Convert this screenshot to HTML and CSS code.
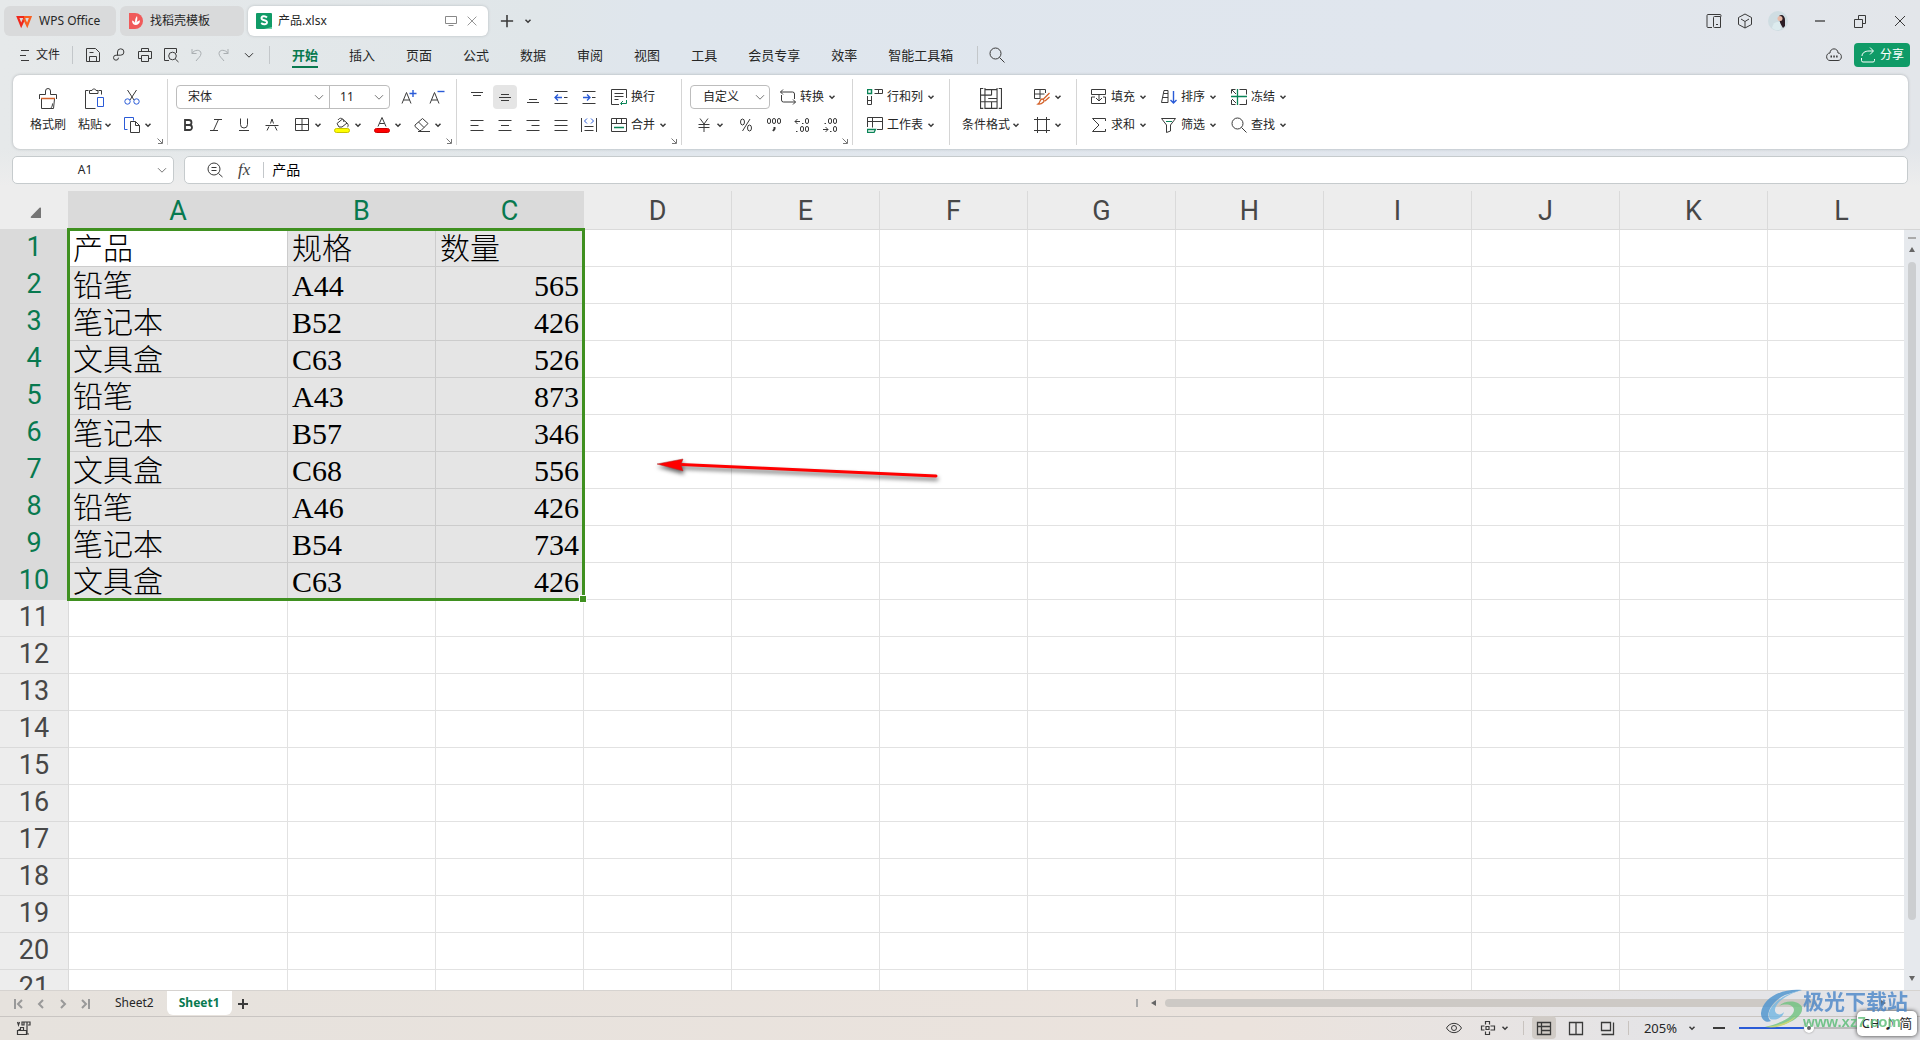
FILE: index.html
```html
<!DOCTYPE html>
<html lang="zh-CN">
<head>
<meta charset="utf-8">
<title>产品.xlsx</title>
<link rel="stylesheet" href="styles.css">
</head>
<body>
<svg class="sprite" aria-hidden="true">
  <symbol id="chev" viewBox="0 0 8 8"><path d="M1.5 2.8 4 5.2 6.500 2.800" stroke-width="1.5"/></symbol>
  <symbol id="chev-thin" viewBox="0 0 10 10"><path d="M1 3.200 5 7.200 9 3.200"/></symbol>
  <symbol id="launch" viewBox="0 0 6 6"><path d="M.5.5 5 5M5.500 1v4.500H1"/></symbol>
  <symbol id="search" viewBox="0 0 16 16"><circle cx="6.500" cy="6.500" r="5.500"/><path d="m10.500 10.500 5 5"/></symbol>
  <symbol id="brush" viewBox="0 0 20 22"><path d="M1.500 11V6.500h6V3a2.500 2.500 0 0 1 5 0v3.500h6V11M3.500 11v9.500h12l1-9.500M12.500 20.500c1.500-1.500 2-3 2-5"/><path d="M3 10.500h14" stroke="#d4622a" stroke-width="1.500"/></symbol>
  <symbol id="paste" viewBox="0 0 22 22"><path d="M4.500 2.500h-3v18h10M14.500 2.500h3v4M5.500 5.500v-3h2.500c0-2 4-2 4 0h2v3z"/><path d="M13.500 9.500h6v9h-6z" stroke="#2a5bd7"/></symbol>
  <symbol id="cut" viewBox="0 0 16 16"><path d="m3.500 1 6.500 10M12.500 1 6 11"/><circle cx="3.500" cy="12.500" r="2.700" stroke="#2a5bd7"/><circle cx="12.500" cy="12.500" r="2.700" stroke="#2a5bd7"/></symbol>
  <symbol id="copy" viewBox="0 0 16 16"><path d="M3.500 12.500h-3v-12h9v3" stroke="#2a5bd7"/><path d="M6.500 4.500h5l4 4v7h-9zM11.500 4.500v4h4"/></symbol>
  <symbol id="aplus" viewBox="0 0 16 16"><path d="m1 14.500 4.500-11 4.500 11M2.500 11h6"/><path d="M8.500 4.500h7M12 1v7" stroke="#2a5bd7" stroke-width="1.400"/></symbol>
  <symbol id="aminus" viewBox="0 0 16 16"><path d="m1 14.500 4.500-11 4.500 11M2.500 11h6"/><path d="M8.500 2.500h7" stroke="#2a5bd7" stroke-width="1.400"/></symbol>
  <symbol id="bold" viewBox="0 0 16 16"><path d="M5 3h4a2.500 2.500 0 0 1 0 5H5zM5 8h4.500a2.500 2.500 0 0 1 0 5H5z" stroke-width="1.800"/></symbol>
  <symbol id="italic" viewBox="0 0 16 16"><path d="M6 2.500h8M2 13.500h8M10.500 2.500l-5 11"/></symbol>
  <symbol id="underline" viewBox="0 0 16 16"><path d="M4.500 1.500v6a3.500 3.500 0 0 0 7 0v-6M3 13.500h10"/></symbol>
  <symbol id="strike" viewBox="0 0 16 16"><path d="m3 13.500 2-4M6.500 6.500 8 2l1.500 4.500M11 9.500l2 4M1.500 8.500h13"/></symbol>
  <symbol id="borders" viewBox="0 0 16 16"><path d="M1.500 1.500h13v12h-13zM8 1.500v12M1.500 7.500h13"/></symbol>
  <symbol id="fill" viewBox="0 0 16 16"><path d="M3 6.500 8.500 2l4.500 4-5 4H5zM4 3c2-3 5-2 6 2M13 6c2 2 1 4 .500 4"/><rect x=".500" y="11.500" width="15" height="4" rx="2" fill="#ff0" stroke="#c9c400"/></symbol>
  <symbol id="fcolor" viewBox="0 0 16 16"><path d="m4 9.500 4-9 4 9M5.500 6.500h5"/><rect x=".500" y="11.500" width="15" height="4" rx="2" fill="#f00" stroke="#c00"/></symbol>
  <symbol id="eraser" viewBox="0 0 16 16"><path d="m1 8 7.500-6.500 5.500 5L7 13.500H5.500L1 9.500zM4.500 5l5.500 5.500M4 14.500h12"/></symbol>
  <symbol id="vtop" viewBox="0 0 16 16"><path d="M2 3.500h12M4 6.500h8"/></symbol>
  <symbol id="vmid" viewBox="0 0 16 16"><path d="M4 5.500h8M2 8.500h12M4 11.500h8"/></symbol>
  <symbol id="vbot" viewBox="0 0 16 16"><path d="M4 10.500h8M2 13.500h12"/></symbol>
  <symbol id="outdent" viewBox="0 0 16 16"><path d="M1.500 2.500h13M1.500 14.500h13M11 8.500h3.500"/><path d="M9 8.500H2M5 5.500l-3 3 3 3" stroke="#2a5bd7" stroke-width="1.300"/></symbol>
  <symbol id="indent" viewBox="0 0 16 16"><path d="M1.500 2.500h13M1.500 14.500h13M11 8.500h3.500"/><path d="M2 8.500h7M6 5.500l3 3-3 3" stroke="#2a5bd7" stroke-width="1.300"/></symbol>
  <symbol id="wrap" viewBox="0 0 16 16"><path d="M8 15.500H.500V.500h15V9M3.500 4.500h9M3.500 7.500h9M3.500 10.500h4"/><path d="M15.500 11v3.500H10M12 12l-2.500 2.500L12 17" stroke="#0a8457"/></symbol>
  <symbol id="left" viewBox="0 0 16 16"><path d="M1.500 3.500h13M1.500 8.500h8M1.500 13.500h13"/></symbol>
  <symbol id="center" viewBox="0 0 16 16"><path d="M1.500 3.500h13M4 8.500h8M1.500 13.500h13"/></symbol>
  <symbol id="right" viewBox="0 0 16 16"><path d="M1.500 3.500h13M6.500 8.500h8M1.500 13.500h13"/></symbol>
  <symbol id="justify" viewBox="0 0 16 16"><path d="M1.500 3.500h13M1.500 8.500h13M1.500 13.500h13"/></symbol>
  <symbol id="distribute" viewBox="0 0 16 16"><path d="M.500 1v14M15.500 1v14M3.500 9.500h9M3.500 13.500h9"/><path d="M6 1.500 3.500 4 6 6.500M10 1.500 12.500 4 10 6.500" stroke="#2a5bd7"/></symbol>
  <symbol id="merge" viewBox="0 0 16 16"><path d="M.500 1.500h15v13H.500zM.500 6.500h15M5.500 1.500v5M10.500 1.500v5"/><path d="M3 10.500h10" stroke="#0a8457" stroke-width="1.500"/></symbol>
  <symbol id="convert" viewBox="0 0 16 16"><path d="M3 .500.500 3 3 5.500M.500 3h12a2 2 0 0 1 2 2v5M1.500 6v5a2 2 0 0 0 2 2h12M13 10.500l2.500 2.500-2.500 2.500"/></symbol>
  <symbol id="yen" viewBox="0 0 16 16"><path d="m4 1.500 4 5.500 4-5.500M2.500 7.500h11M2.500 10.500h11M8 7v8"/></symbol>
  <symbol id="percent" viewBox="0 0 16 16"><ellipse cx="4.500" cy="5" rx="2" ry="3"/><ellipse cx="11.500" cy="11" rx="2" ry="3"/><path d="M12 2 4.500 14"/></symbol>
  <symbol id="thousand" viewBox="0 0 16 16"><rect x="1.500" y="1.500" width="3" height="5" rx="1.500"/><rect x="6.500" y="1.500" width="3" height="5" rx="1.500"/><rect x="11.500" y="1.500" width="3" height="5" rx="1.500"/><path d="M8.500 10v2L7 14" stroke-width="2"/></symbol>
  <symbol id="decadd" viewBox="0 0 16 16"><path d="M6 4.500H1M3.500 2 1 4.500 3.500 7M8 6.500h1.500M2 14.500h1.500"/><rect x="11.500" y="1.500" width="3" height="5" rx="1.500"/><rect x="6.500" y="9.500" width="3" height="5" rx="1.500"/><rect x="11.500" y="9.500" width="3" height="5" rx="1.500"/></symbol>
  <symbol id="decsub" viewBox="0 0 16 16"><path d="M1 12.500h5M3.500 10 6 12.500 3.500 15M8 14.500h1.500M2.500 6.500H4"/><rect x="11.500" y="9.500" width="3" height="5" rx="1.500"/><rect x="6.500" y="1.500" width="3" height="5" rx="1.500"/><rect x="11.500" y="1.500" width="3" height="5" rx="1.500"/></symbol>
  <symbol id="rowcol" viewBox="0 0 16 16"><path d="M7.500.500h8v4h-8M11.500.500v4M.500 7v8.500h4V7M.500 11.500h4"/><path d="M.500.500h4v4h-4z" stroke="#0a8457" stroke-width="1.500"/></symbol>
  <symbol id="wsheet" viewBox="0 0 16 16"><path d="M.500 10V.500h15v12H10M.500 4.500h15M5.500.500v10"/><path d="M.500 12.500h8l-1.500 3H.500z" stroke="#0a8457" stroke-width="1.300"/></symbol>
  <symbol id="cond" viewBox="0 0 20 20"><path d="M3 .500H.500v18H3M17 .500h2.500v18H17M4.500 0v19M15.500 0v19M.500 6.500h10M4.500 1.500h11M10.500 1.500v5M4.500 12.500h11M10.500 12.500v6M4.500 18.500h11M7.500 9.500h8M.500 12.500h4"/></symbol>
  <symbol id="cellstyle" viewBox="0 0 16 16"><path d="M11.500 4V.500H.500v9h6M.500 5h10M6 .500V9"/><path d="M15.500 4 9.500 10M7 10.500c1.500-1.500 4 1 2.500 2.500S6 15.500 4 15c2-1 1.500-3 3-4.500M15.500 8 11 12" stroke="#d4622a" stroke-width="1.300"/></symbol>
  <symbol id="crop" viewBox="0 0 16 16"><path d="M3.500 0v16M12.500 0v16M0 2.500h16M0 13.500h16"/></symbol>
  <symbol id="filldn" viewBox="0 0 16 16"><path d="M.500 5.500v-5h14v5zM4 8H.500v6.500h14V8H12M8 5.500v6M5 9l3 3 3-3"/></symbol>
  <symbol id="sum" viewBox="0 0 16 16"><path d="M14.500 4V1.500h-13L8 8l-6.500 6.500h13V12"/></symbol>
  <symbol id="sort" viewBox="0 0 16 16"><path d="M.500 13.500 3 1.500h4v12M2 8.500h5M.500 13.500H7M2.500 4.500H7"/><path d="M12.500 2v12M9.500 11l3 3 3-3" stroke="#2a5bd7" stroke-width="1.400"/></symbol>
  <symbol id="filter" viewBox="0 0 16 16"><path d="M.500 1.500h14L9.500 8v6l-4 1.500V8z"/><path d="M5 4.500h6" stroke="#0a8457"/></symbol>
  <symbol id="freeze" viewBox="0 0 16 16"><path d="M4.500.500h-4v4M.500 11v4.500h4M8.500.500h7v5M8.500 15.500h7v-5M1 1l4 4M1 10l4 4"/><path d="M6.500 0v16M0 7.500h16" stroke="#0a8457" stroke-width="1.300"/></symbol>
  <symbol id="menu" viewBox="0 0 10 12"><path d="M1 1.500h8M0 6.500h6M1 11.500h8"/></symbol>
  <symbol id="save" viewBox="0 0 16 16"><path d="M1.500 1.500h9l4 4v9h-13zM4.500 14.500v-5h7v5M4.500 5.500h4"/></symbol>
  <symbol id="link" viewBox="0 0 16 16"><path d="M6.500 8.500V5a3.200 3.200 0 1 1 3.200 3.200H5a2.500 2.500 0 1 0 2.500 2.500"/></symbol>
  <symbol id="print" viewBox="0 0 16 16"><path d="M4.500 4.500v-3h7v3M4 11.500H1.500v-7h13v7H12M4.500 8.500h7v6h-7z"/></symbol>
  <symbol id="preview" viewBox="0 0 16 16"><path d="M6 13.500H1.500v-12h12V6"/><circle cx="9.500" cy="9" r="3.800"/><path d="m12.300 12 3.200 3"/></symbol>
  <symbol id="undo" viewBox="0 0 16 16"><path d="M3 2v4.500h4.500M3 6.500C5 2.500 12 2 12 6.500c0 3-3 4.500-5 7.500"/></symbol>
  <symbol id="redo" viewBox="0 0 16 16"><path d="M13 2v4.500H8.500M13 6.500C11 2.500 4 2 4 6.500c0 3 3 4.500 5 7.500"/></symbol>
  <symbol id="zoomout" viewBox="0 0 16 16"><circle cx="7" cy="7" r="6"/><path d="m11.500 11.500 4 3.500M4.500 5.500h5M4.500 8.500h5"/></symbol>
  <symbol id="panel" viewBox="0 0 16 16"><path d="M6 14.500H2a1 1 0 0 1-1-1v-11a1 1 0 0 1 1-1h12a1 1 0 0 1 1 1v1M7.500 4.500A1 1 0 0 1 8.500 3.500h6v11h-6a1 1 0 0 1-1-1zM10 11.500h2"/></symbol>
  <symbol id="cube" viewBox="0 0 16 16"><path d="m8 1 6.500 3.500v7L8 15l-6.500-3.500v-7zM4 6l4 2.500L12 6M8 8.500V15"/></symbol>
  <symbol id="cloud" viewBox="0 0 16 16"><path d="M4 6C4 .500 12 .500 12 6c4.500 0 4.500 7.500 0 7.500H4C-.500 13.500-.500 6 4 6z"/><path d="M4.500 9.500h1.500M7.300 9.500h1.500M10.100 9.500h1.500" stroke-width="1.800"/></symbol>
  <symbol id="share" viewBox="0 0 16 16"><path d="M1.500 11v2.500a1.500 1.500 0 0 0 1.500 1.500h10a1.500 1.500 0 0 0 1.500-1.500V12M2 9c0-3 3-5 7-5h4M10 .500l3.500 3.500L10 7.500"/></symbol>
  <symbol id="min" viewBox="0 0 16 16"><path d="M3 8h10" stroke-width="1.300"/></symbol>
  <symbol id="restore" viewBox="0 0 16 16"><path d="M2.500 6.500h8v8h-8zM6.500 6.500v-4h7v8h-3"/></symbol>
  <symbol id="close" viewBox="0 0 16 16"><path d="m3 3 10 10M13 3 3 13"/></symbol>
  <symbol id="plus" viewBox="0 0 16 16"><path d="M1 8h14M8 1v14" stroke-width="1.800"/></symbol>
  <symbol id="monitor" viewBox="0 0 12 12"><path d="M.500 1.500h11v7H.500zM3.500 10.500h5"/></symbol>
  <symbol id="prev" viewBox="0 0 10 12"><path d="M7 2 3 6l4 4" stroke-width="2"/></symbol>
  <symbol id="next" viewBox="0 0 10 12"><path d="m3 2 4 4-4 4" stroke-width="2"/></symbol>
  <symbol id="first" viewBox="0 0 10 12"><path d="M1 1v10M8 2 4 6l4 4" stroke-width="2"/></symbol>
  <symbol id="last" viewBox="0 0 10 12"><path d="M9 1v10M2 2l4 4-4 4" stroke-width="2"/></symbol>
  <symbol id="macro" viewBox="0 0 16 16"><path d="m1.500 2 1 3 1-3M6 2h2v3H6zM11 5V2h3v3h-2M8 2h3v12M2.500 9.500h2v-2h3v3M1.500 10.500h9v4h-9zM11 14h2" stroke-width="1.200"/></symbol>
  <symbol id="eye" viewBox="0 0 16 16"><path d="M.500 8C4 1.800 12 1.800 15.500 8 12 14.200 4 14.200.500 8z"/><circle cx="8" cy="8" r="2.500"/></symbol>
  <symbol id="focus" viewBox="0 0 16 16"><path d="M5.500 4.500v-3h4v3M5.500 11.500v3h4v-3M4.500 6H1.500v4h3M10.500 6h4v4h-4M6 6.500h3v3H6z" stroke-width="1.200"/></symbol>
  <symbol id="vnormal" viewBox="0 0 16 16"><path d="M1.500 2.500h13v12h-13zM1.500 6.500h13M5.500 2.500v12M5.500 10.500h9" stroke-width="1.300"/></symbol>
  <symbol id="vsplit" viewBox="0 0 16 16"><path d="M1.500 2.500h13v12h-13zM8 2.500v12" stroke-width="1.300"/></symbol>
  <symbol id="vpage" viewBox="0 0 16 16"><path d="M1.500 2.500h9v8h-9zM13.500 2.500v12h-12" stroke-width="1.300"/></symbol>
</svg>

<div class="app">
  <header class="titlebar">
    <button class="doc-tab tab-home"><svg class="i16" viewBox="0 0 16 16"><path d="M8.500 4H1.800l3.400 8.500L8.500 5" stroke="#f0281c" stroke-width="2.200"/><path d="M8 4h6.500l-3.300 8.500L8 5.500" stroke="#fa5f20" stroke-width="2.200"/></svg>WPS Office</button>
    <button class="doc-tab tab-template"><svg class="i16" viewBox="0 0 16 16"><path d="M1 0h6a8 8 0 0 1 0 16H1z" fill="#f05a5a" stroke="none"/><path d="M4 7.500c2 .500 3 1.500 3 3C7 8 7 5 9 3c.500 2 .500 4-.500 6.500C9.500 8 11 7.500 12 7.500 12 13 4 14 4 7.500z" fill="#fff" stroke="none"/></svg>找稻壳模板</button>
    <div class="doc-tab tab-active"><svg class="i16" viewBox="0 0 16 16"><rect width="16" height="16" rx="1" fill="#109b67" stroke="none"/><path d="M8 16h8v-2z" fill="#6fd3a8" stroke="none"/><path d="M11 4.500C9 2.500 5.500 3 5.500 5.200c0 2.600 5.500 1.500 5.500 4.100 0 2.200-3.500 2.700-5.800.7" stroke="#fff" stroke-width="1.900"/></svg><span class="grow">产品.xlsx</span><svg class="i12"><use href="#monitor"/></svg><button class="plain" aria-label="关闭"><svg class="i14"><use href="#close"/></svg></button></div>
    <button class="plain new-tab" aria-label="新建"><svg class="i14"><use href="#plus"/></svg></button>
    <button class="plain" aria-label="更多"><svg class="i8"><use href="#chev"/></svg></button>
    <div class="grow"></div>
    <div class="side-icons"><button class="plain" aria-label="面板"><svg class="i16"><use href="#panel"/></svg></button><button class="plain" aria-label="应用"><svg class="i16"><use href="#cube"/></svg></button><button class="plain" aria-label="账号"><svg class="i20" viewBox="0 0 20 20"><circle cx="10" cy="10" r="10" fill="#cfdde2" stroke="none"/><path d="M11 5c3-2.500 6 0 6 4v6l-2 2-3-5z" fill="#2b1d25" stroke="none"/><circle cx="12" cy="7.500" r="2.500" fill="#e8b9a6" stroke="none"/><path d="M4 17c1-5 4-7 8-6l1 7c-3 2-7 1-9-1z" fill="#dcebee" stroke="none"/></svg></button></div>
    <div class="win-icons"><button class="plain" aria-label="最小化"><svg class="i16"><use href="#min"/></svg></button><button class="plain" aria-label="还原"><svg class="i16"><use href="#restore"/></svg></button><button class="plain" aria-label="关闭窗口"><svg class="i16"><use href="#close"/></svg></button></div>
  </header>

  <nav class="menubar">
    <button class="plain file-menu"><svg class="imenu"><use href="#menu"/></svg>文件</button>
    <span class="vline"></span>
    <div class="quick">
      <button class="plain" aria-label="保存"><svg class="i16"><use href="#save"/></svg></button><button class="plain" aria-label="链接"><svg class="i16"><use href="#link"/></svg></button><button class="plain" aria-label="打印"><svg class="i16"><use href="#print"/></svg></button><button class="plain" aria-label="预览"><svg class="i16"><use href="#preview"/></svg></button><button class="plain dim" aria-label="撤销"><svg class="i16"><use href="#undo"/></svg></button><button class="plain dim" aria-label="恢复"><svg class="i16"><use href="#redo"/></svg></button><button class="plain more" aria-label="更多命令"><svg class="i10 strong"><use href="#chev-thin"/></svg></button>
    </div>
    <span class="vline"></span>
    <div class="menus">
      <a href="#" class="current">开始</a><a href="#">插入</a><a href="#">页面</a><a href="#">公式</a><a href="#">数据</a><a href="#">审阅</a><a href="#">视图</a><a href="#">工具</a><a href="#">会员专享</a><a href="#">效率</a><a href="#">智能工具箱</a>
    </div>
    <span class="vline"></span>
    <button class="plain find" aria-label="搜索"><svg class="i16"><use href="#search"/></svg></button>
    <div class="grow"></div>
    <button class="plain" aria-label="云"><svg class="i16"><use href="#cloud"/></svg></button>
    <button class="share"><svg class="i16"><use href="#share"/></svg>分享</button>
  </nav>

  <section class="ribbon">
    <div class="group g-clip">
      <button class="big"><svg class="i22"><use href="#brush"/></svg><span>格式刷</span></button>
      <button class="big"><svg class="i22"><use href="#paste"/></svg><span>粘贴<svg class="i8"><use href="#chev"/></svg></span></button>
      <div class="rows"><div class="row"><button class="wide" aria-label="剪切"><svg class="i16"><use href="#cut"/></svg></button></div><div class="row"><button class="wide" aria-label="复制"><svg class="i16"><use href="#copy"/></svg><svg class="i8"><use href="#chev"/></svg></button></div></div>
      <svg class="launch"><use href="#launch"/></svg>
    </div>
    <div class="group g-font">
      <div class="rows">
        <div class="row">
          <div class="fields"><label class="pick pick-font"><select aria-label="字体"><option>宋体</option></select><svg class="i10"><use href="#chev-thin"/></svg></label><label class="pick pick-size"><select aria-label="字号"><option>11</option></select><svg class="i10"><use href="#chev-thin"/></svg></label></div>
          <button class="tool" aria-label="增大字号"><svg class="i16"><use href="#aplus"/></svg></button><button class="tool" aria-label="减小字号"><svg class="i16"><use href="#aminus"/></svg></button>
        </div>
        <div class="row">
          <button class="tool" aria-label="加粗"><svg class="i16"><use href="#bold"/></svg></button><button class="tool" aria-label="倾斜"><svg class="i16"><use href="#italic"/></svg></button><button class="tool" aria-label="下划线"><svg class="i16"><use href="#underline"/></svg></button><button class="tool" aria-label="删除线"><svg class="i16"><use href="#strike"/></svg></button><button class="wide" aria-label="边框"><svg class="i16"><use href="#borders"/></svg><svg class="i8"><use href="#chev"/></svg></button><button class="wide" aria-label="填充颜色"><svg class="i16"><use href="#fill"/></svg><svg class="i8"><use href="#chev"/></svg></button><button class="wide" aria-label="字体颜色"><svg class="i16"><use href="#fcolor"/></svg><svg class="i8"><use href="#chev"/></svg></button><button class="wide" aria-label="清除"><svg class="i16"><use href="#eraser"/></svg><svg class="i8"><use href="#chev"/></svg></button>
        </div>
      </div>
      <svg class="launch"><use href="#launch"/></svg>
    </div>
    <div class="group">
      <div class="rows">
        <div class="row"><button class="tool" aria-label="顶端对齐"><svg class="i16"><use href="#vtop"/></svg></button><button class="tool on" aria-label="垂直居中"><svg class="i16"><use href="#vmid"/></svg></button><button class="tool" aria-label="底端对齐"><svg class="i16"><use href="#vbot"/></svg></button><button class="tool" aria-label="减少缩进"><svg class="i16"><use href="#outdent"/></svg></button><button class="tool" aria-label="增加缩进"><svg class="i16"><use href="#indent"/></svg></button><button class="wide text"><svg class="i16"><use href="#wrap"/></svg>换行</button></div>
        <div class="row"><button class="tool" aria-label="左对齐"><svg class="i16"><use href="#left"/></svg></button><button class="tool" aria-label="居中"><svg class="i16"><use href="#center"/></svg></button><button class="tool" aria-label="右对齐"><svg class="i16"><use href="#right"/></svg></button><button class="tool" aria-label="两端对齐"><svg class="i16"><use href="#justify"/></svg></button><button class="tool" aria-label="分散对齐"><svg class="i16"><use href="#distribute"/></svg></button><button class="wide text"><svg class="i16"><use href="#merge"/></svg>合并<svg class="i8"><use href="#chev"/></svg></button></div>
      </div>
      <svg class="launch"><use href="#launch"/></svg>
    </div>
    <div class="group">
      <div class="rows">
        <div class="row"><label class="pick pick-format"><select aria-label="数字格式"><option>自定义</option></select><svg class="i10"><use href="#chev-thin"/></svg></label><button class="wide text"><svg class="i16"><use href="#convert"/></svg>转换<svg class="i8"><use href="#chev"/></svg></button></div>
        <div class="row"><button class="wide money" aria-label="货币"><svg class="i16"><use href="#yen"/></svg><svg class="i8"><use href="#chev"/></svg></button><button class="tool" aria-label="百分比"><svg class="i16"><use href="#percent"/></svg></button><button class="tool" aria-label="千位分隔"><svg class="i16"><use href="#thousand"/></svg></button><button class="tool" aria-label="增加小数"><svg class="i16"><use href="#decadd"/></svg></button><button class="tool" aria-label="减少小数"><svg class="i16"><use href="#decsub"/></svg></button></div>
      </div>
      <svg class="launch"><use href="#launch"/></svg>
    </div>
    <div class="group">
      <div class="rows">
        <div class="row"><button class="wide text"><svg class="i16"><use href="#rowcol"/></svg>行和列<svg class="i8"><use href="#chev"/></svg></button></div>
        <div class="row"><button class="wide text"><svg class="i16"><use href="#wsheet"/></svg>工作表<svg class="i8"><use href="#chev"/></svg></button></div>
      </div>
    </div>
    <div class="group g-style">
      <button class="big"><svg class="i22"><use href="#cond"/></svg><span>条件格式<svg class="i8"><use href="#chev"/></svg></span></button>
      <div class="rows"><div class="row"><button class="wide" aria-label="单元格样式"><svg class="i16"><use href="#cellstyle"/></svg><svg class="i8"><use href="#chev"/></svg></button></div><div class="row"><button class="wide" aria-label="单元格"><svg class="i16"><use href="#crop"/></svg><svg class="i8"><use href="#chev"/></svg></button></div></div>
    </div>
    <div class="group">
      <div class="rows">
        <div class="row"><button class="wide text"><svg class="i16"><use href="#filldn"/></svg>填充<svg class="i8"><use href="#chev"/></svg></button><button class="wide text"><svg class="i16"><use href="#sort"/></svg>排序<svg class="i8"><use href="#chev"/></svg></button><button class="wide text"><svg class="i16"><use href="#freeze"/></svg>冻结<svg class="i8"><use href="#chev"/></svg></button></div>
        <div class="row"><button class="wide text"><svg class="i16"><use href="#sum"/></svg>求和<svg class="i8"><use href="#chev"/></svg></button><button class="wide text"><svg class="i16"><use href="#filter"/></svg>筛选<svg class="i8"><use href="#chev"/></svg></button><button class="wide text"><svg class="i16"><use href="#search"/></svg>查找<svg class="i8"><use href="#chev"/></svg></button></div>
      </div>
    </div>
  </section>

  <section class="formula-row">
    <div class="name-box"><input aria-label="名称框" value="A1"><svg class="i10"><use href="#chev-thin"/></svg></div>
    <div class="formula-box"><svg class="i16"><use href="#zoomout"/></svg><span class="fx">fx</span><span class="vline"></span><input aria-label="编辑栏" value="产品"></div>
  </section>

  <main class="sheet">
    <div class="canvas">
      <table class="grid">
        <colgroup><col class="c-head"><col class="c-a"><col><col><col><col><col><col><col><col><col><col><col></colgroup>
        <thead><tr><th class="corner"><svg class="i12" viewBox="0 0 12 12"><path d="M11 1v9.500a.500.500 0 0 1-.500.500H1.500c-1 0-1-1-.500-1.500L9.500.800c.700-.600 1.500-.500 1.500.200z" fill="#757575" stroke="none"/></svg></th><th class="sel">A</th><th class="sel">B</th><th class="sel">C</th><th>D</th><th>E</th><th>F</th><th>G</th><th>H</th><th>I</th><th>J</th><th>K</th><th>L</th></tr></thead>
        <tbody>
          <tr class="sel"><th>1</th><td class="cur">产品</td><td>规格</td><td>数量</td><td></td><td></td><td></td><td></td><td></td><td></td><td></td><td></td><td></td></tr>
          <tr class="sel"><th>2</th><td>铅笔</td><td>A44</td><td class="num">565</td><td></td><td></td><td></td><td></td><td></td><td></td><td></td><td></td><td></td></tr>
          <tr class="sel"><th>3</th><td>笔记本</td><td>B52</td><td class="num">426</td><td></td><td></td><td></td><td></td><td></td><td></td><td></td><td></td><td></td></tr>
          <tr class="sel"><th>4</th><td>文具盒</td><td>C63</td><td class="num">526</td><td></td><td></td><td></td><td></td><td></td><td></td><td></td><td></td><td></td></tr>
          <tr class="sel"><th>5</th><td>铅笔</td><td>A43</td><td class="num">873</td><td></td><td></td><td></td><td></td><td></td><td></td><td></td><td></td><td></td></tr>
          <tr class="sel"><th>6</th><td>笔记本</td><td>B57</td><td class="num">346</td><td></td><td></td><td></td><td></td><td></td><td></td><td></td><td></td><td></td></tr>
          <tr class="sel"><th>7</th><td>文具盒</td><td>C68</td><td class="num">556</td><td></td><td></td><td></td><td></td><td></td><td></td><td></td><td></td><td></td></tr>
          <tr class="sel"><th>8</th><td>铅笔</td><td>A46</td><td class="num">426</td><td></td><td></td><td></td><td></td><td></td><td></td><td></td><td></td><td></td></tr>
          <tr class="sel"><th>9</th><td>笔记本</td><td>B54</td><td class="num">734</td><td></td><td></td><td></td><td></td><td></td><td></td><td></td><td></td><td></td></tr>
          <tr class="sel"><th>10</th><td>文具盒</td><td>C63</td><td class="num">426</td><td></td><td></td><td></td><td></td><td></td><td></td><td></td><td></td><td></td></tr>
          <tr><th>11</th><td></td><td></td><td></td><td></td><td></td><td></td><td></td><td></td><td></td><td></td><td></td><td></td></tr>
          <tr><th>12</th><td></td><td></td><td></td><td></td><td></td><td></td><td></td><td></td><td></td><td></td><td></td><td></td></tr>
          <tr><th>13</th><td></td><td></td><td></td><td></td><td></td><td></td><td></td><td></td><td></td><td></td><td></td><td></td></tr>
          <tr><th>14</th><td></td><td></td><td></td><td></td><td></td><td></td><td></td><td></td><td></td><td></td><td></td><td></td></tr>
          <tr><th>15</th><td></td><td></td><td></td><td></td><td></td><td></td><td></td><td></td><td></td><td></td><td></td><td></td></tr>
          <tr><th>16</th><td></td><td></td><td></td><td></td><td></td><td></td><td></td><td></td><td></td><td></td><td></td><td></td></tr>
          <tr><th>17</th><td></td><td></td><td></td><td></td><td></td><td></td><td></td><td></td><td></td><td></td><td></td><td></td></tr>
          <tr><th>18</th><td></td><td></td><td></td><td></td><td></td><td></td><td></td><td></td><td></td><td></td><td></td><td></td></tr>
          <tr><th>19</th><td></td><td></td><td></td><td></td><td></td><td></td><td></td><td></td><td></td><td></td><td></td><td></td></tr>
          <tr><th>20</th><td></td><td></td><td></td><td></td><td></td><td></td><td></td><td></td><td></td><td></td><td></td><td></td></tr>
          <tr><th>21</th><td></td><td></td><td></td><td></td><td></td><td></td><td></td><td></td><td></td><td></td><td></td><td></td></tr>
        </tbody>
      </table>
      <div class="selection"></div>
      <svg class="arrow" viewBox="0 0 290 30"><path d="M24 7.500 279 19" stroke="#f00" stroke-width="3" stroke-linecap="round"/><path d="M0 7 26 2l-2 5.500 2 6.500z" fill="#f00" stroke="#a33" stroke-width=".5"/></svg>
    </div>
    <div class="vscroll"><span class="split"></span><span class="up"></span><span class="vthumb"></span><span class="down"></span></div>
  </main>

  <section class="sheet-tabs">
    <div class="navs"><button class="plain" aria-label="第一张"><svg class="inav"><use href="#first"/></svg></button><button class="plain" aria-label="上一张"><svg class="inav"><use href="#prev"/></svg></button><button class="plain" aria-label="下一张"><svg class="inav"><use href="#next"/></svg></button><button class="plain" aria-label="最后一张"><svg class="inav"><use href="#last"/></svg></button></div>
    <button class="sheet-tab">Sheet2</button><button class="sheet-tab current">Sheet1</button>
    <button class="plain add" aria-label="新建工作表"><svg class="i12" viewBox="0 0 12 12"><path d="M1 6h10M6 1v10" stroke-width="2"/></svg></button>
    <div class="hscroll"><span class="split"></span><span class="lft"></span><span class="hthumb"></span><span class="rgt"></span></div>
  </section>

  <footer class="status">
    <svg class="i16"><use href="#macro"/></svg>
    <div class="grow"></div>
    <button class="plain" aria-label="护眼"><svg class="i16"><use href="#eye"/></svg></button>
    <button class="plain focus" aria-label="聚焦"><svg class="i16"><use href="#focus"/></svg><svg class="i8"><use href="#chev"/></svg></button>
    <span class="vline"></span>
    <div class="views"><button class="view on" aria-label="普通视图"><svg class="i16"><use href="#vnormal"/></svg></button><button class="view" aria-label="分页预览"><svg class="i16"><use href="#vsplit"/></svg></button><button class="view" aria-label="页面布局"><svg class="i16"><use href="#vpage"/></svg></button></div>
    <span class="vline"></span>
    <button class="plain percent">205%<svg class="i8"><use href="#chev"/></svg></button>
    <button class="plain minus" aria-label="缩小"><svg class="i12" viewBox="0 0 12 12"><path d="M0 6h12" stroke-width="2"/></svg></button>
    <input class="zoom" type="range" min="0" max="100" value="50" aria-label="缩放">
  </footer>

  <div class="ime">CH ♪ 简</div>
  <div class="watermark">
    <svg class="swirl" viewBox="0 0 42 40"><path d="M41 1C22-1 2 8 0 24c0 8 6 10 10 8C4 28 8 14 24 6z" fill="#4b93cf" stroke="none"/><path d="M41 1C30 4 16 11 14 20c-1 6 6 7 9 3-1 6-9 9-14 7C3 20 20 5 41 1z" fill="#72b7e3" stroke="none"/><path d="M18 17c6-6 19-6 23 1 2 9-13 20-37 20 14-3 29-10 29-17 0-5-8-7-15-4z" fill="#6fc380" stroke="none"/><path d="M4 38c13-1 24-5 31-11-6 8-18 13-31 11z" fill="#c3d45e" stroke="none"/></svg>
    <div class="mark-text"><strong>极光下载站</strong><span>www.xz7.com</span></div>
  </div>
</div>
</body>
</html>
```
FILE: styles.css
```css
* { box-sizing: border-box; }
body {
  margin: 0;
  font: 12px/16px "Noto Sans", "Noto Sans CJK SC", sans-serif;
  color: #262626;
}
button, select, input { font: inherit; color: inherit; }
button { border: 0; background: none; padding: 0; display: flex; align-items: center; }
svg { fill: none; stroke: #3a3a3a; flex: none; display: block; overflow: visible; }
.sprite { position: absolute; width: 0; height: 0; }
.i8 { width: 8px; height: 8px; }
.i10 { width: 10px; height: 10px; stroke: #777; }
.i12 { width: 12px; height: 12px; }
.i14 { width: 14px; height: 14px; }
.i16 { width: 16px; height: 16px; }
.i20 { width: 20px; height: 20px; }
.i22 { width: 22px; height: 22px; }
.strong { stroke: #333; }
.grow { flex: 1; }
.vline { width: 1px; height: 18px; background: #c3c7ca; }

.app {
  position: relative;
  display: flex;
  flex-direction: column;
  height: 100vh;
  overflow: hidden;
  background: linear-gradient(90deg, #e6e9ea 0, #e0e6e9 28%, #dfe6ed 34%, #e0e6ee 75%, #e3e6ea 100%);
}

/* title bar */
.titlebar { display: flex; align-items: center; height: 38px; padding: 4px 16px 0 4px; }
.doc-tab {
  display: flex;
  align-items: center;
  gap: 7px;
  height: 30px;
  margin-right: 4px;
  padding: 0 12px;
  border-radius: 6px;
  background: #d9dadb;
  white-space: nowrap;
}
.tab-home { width: 112px; }
.tab-template { width: 124px; padding: 0 8px; gap: 6px; }
.tab-active { width: 240px; padding: 0 9px 0 8px; gap: 6px; background: #fff; box-shadow: 0 0 3px #b5babd; }
.tab-active .i12, .tab-active .i14 { stroke: #888; }
.tab-active .plain { margin-left: 2px; }
.new-tab { margin: 0 10px 0 8px; }
.side-icons { display: flex; align-items: center; gap: 15px; margin-right: 24px; }
.win-icons { display: flex; gap: 24px; margin-right: -4px; }

/* menu row */
.menubar { display: flex; align-items: center; height: 37px; padding: 0 10px 4px 20px; }
.file-menu { gap: 6px; }
.imenu { width: 10px; height: 12px; }
.file-menu + .vline { margin: 0 12px; }
.quick { display: flex; align-items: center; gap: 10px; margin-right: 15px; }
.quick .more { margin-left: 3px; }
.dim svg { stroke: #aaafb2; }
.menus { display: flex; gap: 31px; margin: 0 24px 0 22px; font-size: 13px; }
.menus a { color: inherit; text-decoration: none; height: 24px; line-height: 22px; border-bottom: 2px solid transparent; margin-top: 3px; white-space: nowrap; }
.menus .current { color: #08794f; font-weight: 700; border-color: #08794f; }
.find { margin-left: 11px; }
.share { height: 24px; padding: 0 6px; gap: 4px; margin-left: 12px; border-radius: 4px; background: #109b67; color: #fff; }
.share svg { stroke: #fff; }

/* ribbon */
.ribbon {
  display: flex;
  height: 74px;
  margin: 0 12px 0 13px;
  padding: 4px 0;
  background: #fff;
  border-radius: 7px;
  box-shadow: 0 0 3px #a7acb0;
}
.group { position: relative; display: flex; padding: 6px 8px 0 6px; border-right: 1px solid #d5d5d5; }
.group:last-child { border: 0; }
.g-clip { padding: 6px 11px 0 11px; }
.g-clip .rows { margin-left: -2px; }
.g-font { padding-right: 5px; }
.g-style { padding: 6px 10px 0 6px; }
.rows { display: flex; flex-direction: column; gap: 4px; }
.row { display: flex; align-items: center; height: 24px; }
.tool { width: 28px; height: 24px; justify-content: center; }
.tool.on { width: 24px; margin: 0 2px; border-radius: 4px; background: #e5e5e5; }
.wide { height: 24px; gap: 4px; padding: 0 4px 0 8px; white-space: nowrap; }
.wide.text { padding-right: 6px; }
.money { margin-right: 4px; }
.big { flex-direction: column; gap: 7px; height: 52px; padding: 3px 6px 0; white-space: nowrap; }
.big span { display: flex; align-items: center; gap: 2px; }
.launch { position: absolute; right: 4px; bottom: 1px; width: 6px; height: 6px; stroke: #777; }
.fields { display: flex; margin: 0 5px 0 2px; border: 1px solid #bdbdbd; border-radius: 4px; height: 24px; }
.pick { display: flex; align-items: center; padding-right: 5px; }
.pick select { appearance: none; border: 0; background: none; padding: 0; min-width: 0; flex: 1; outline: 0; }
.pick-font { width: 152px; padding-left: 11px; }
.pick-size { width: 60px; padding-left: 10px; border-left: 1px solid #bdbdbd; }
.pick-format { width: 80px; height: 24px; margin: 0 2px; padding-left: 12px; padding-right: 4px; border: 1px solid #bdbdbd; border-radius: 4px; }

/* name box and formula bar */
.formula-row { display: flex; gap: 10px; padding: 7px 12px 6px 12px; height: 42px; background: linear-gradient(transparent, #ededed 90%); }
.name-box, .formula-box { display: flex; align-items: center; height: 28px; background: #fff; border: 1px solid #c6cbcd; border-radius: 5px; }
.name-box { width: 162px; padding: 0 6px; }
.name-box input { width: 100%; min-width: 0; text-align: center; padding-right: 6px; }
.name-box input, .formula-box input { border: 0; background: none; outline: 0; }
.name-box input { padding: 0 6px 0 0; }
.formula-box { flex: 1; padding-left: 22px; }
.formula-box input { flex: 1; padding: 0; font-size: 14px; color: #000; }
.fx { margin: 0 13px 0 15px; font: italic 17px/20px "Liberation Serif", serif; color: #444; }
.formula-box .vline { margin-right: 8px; height: 16px; }

/* worksheet */
.sheet { flex: 1; min-height: 0; display: flex; }
.canvas { position: relative; flex: 1; min-width: 0; overflow: hidden; background: #fff; }
.grid { width: 1916px; table-layout: fixed; border-collapse: separate; border-spacing: 0; }
.grid col { width: 148px; }
.grid .c-head { width: 69px; }
.grid .c-a { width: 219px; }
.grid th { padding: 0; font: 400 27px/32px Roboto, sans-serif; color: #474747; background: #ededed; border: solid #dadada; border-width: 0 1px 1px 0; }
.grid thead th { height: 39px; padding-top: 2px; }
.grid tbody th { height: 37px; padding-bottom: 2px; }
.grid .corner svg { margin: 3px 0 0 30px; }
.grid th.sel, .grid tr.sel th { color: #08794f; background: #dadada; }
.grid td { height: 37px; padding: 2px 4px 0; border: solid #e2e2e2; border-width: 0 1px 1px 0; font: 300 30px/34px "Liberation Serif", "Noto Sans CJK SC", serif; color: #000; white-space: nowrap; overflow: hidden; }
.grid tr.sel td:nth-child(-n+4) { background: #e5e5e5; border-color: #ccc; }
.grid tr.sel td.cur { background: #fff; }
.grid .num { text-align: right; }
.selection { position: absolute; left: 67px; top: 37px; width: 518px; height: 373px; border: 3px solid #3f9020; pointer-events: none; }
.selection::after { content: ""; position: absolute; right: -5px; bottom: -5px; width: 6px; height: 6px; background: #3f9020; border: 1px solid #fff; }
.arrow { position: absolute; left: 657px; top: 266px; width: 290px; height: 30px; filter: drop-shadow(1px 3px 2px rgba(0, 0, 0, .6)); }
.vscroll { width: 16px; display: flex; flex-direction: column; align-items: center; margin-top: 38px; padding: 7px 0 9px; background: #e6e9ed; border-top: 1px solid #d5d5d5; box-shadow: 0 -38px #ededed; }
.vscroll .split { width: 8px; height: 2px; background: #aaa; }
.up, .down { border: 3px solid transparent; }
.up { border-bottom: 5px solid #666; border-top: 0; margin: 8px 0 10px; }
.vthumb { flex: 1; width: 8px; margin-bottom: 56px; border-radius: 4px; background: #ccced0; }
.down { border-top: 5px solid #666; border-bottom: 0; }

/* sheet tabs */
.sheet-tabs { display: flex; height: 26px; border-top: 1px solid #d6d3d0; background: linear-gradient(90deg, #e6e2dd, #ebe3dd 65%, #e4e4e7 88%); }
.navs { display: flex; align-items: center; gap: 12px; padding: 0 14px; }
.inav { width: 10px; height: 12px; stroke: #999; }
.sheet-tab { padding: 0 13px 1px; height: 24px; font-size: 12px; }
.navs + .sheet-tab { margin-left: -2px; }
.sheet-tab.current { padding: 0 12px 1px; background: #fff; color: #08794f; font-weight: 700; border-radius: 0 0 6px 6px; }
.add { margin-left: 5px; }
.hscroll { display: flex; align-items: center; width: 784px; margin-left: auto; padding-bottom: 2px; }
.hscroll .split { width: 2px; height: 8px; background: #aaa; }
.lft, .rgt { border: 3px solid transparent; }
.lft { border-right: 5px solid #666; border-left: 0; margin: 0 9px 0 13px; }
.hthumb { flex: 1; height: 8px; border-radius: 4px; background: #cdc9c5; }
.rgt { border-left: 5px solid #666; border-right: 0; margin: 0 34px 0 64px; }

/* status bar */
.status { display: flex; align-items: center; height: 24px; padding: 0 41px 2px 16px; border-top: 1px solid #c9c5c2; background: linear-gradient(90deg, #e6e2dd, #ebe3dd 65%, #e4e4e7 88%); }
.focus { gap: 5px; margin: 0 14px 0 18px; }
.status .vline { height: 14px; background: #c8c3bf; }
.views { display: flex; gap: 8px; margin: 0 8px; }
.view { width: 24px; height: 23px; justify-content: center; border-radius: 4px; }
.view.on { background: #d0cbc6; }
.percent { margin-left: 15px; gap: 11px; font-size: 13px; }
.minus { margin: 0 14px 0 17px; }
.zoom { appearance: none; width: 140px; height: 10px; margin: 0; background: linear-gradient(90deg, #2a5bd7 50%, #bbb 50%) center / 100% 2px no-repeat; }
.zoom::-webkit-slider-thumb { appearance: none; width: 10px; height: 10px; border: 3px solid #fff; border-radius: 50%; background: #666; box-shadow: 0 0 2px #888; }

/* overlays */
.watermark { position: absolute; right: 12px; bottom: 9px; display: flex; opacity: .8; pointer-events: none; }
.swirl { width: 42px; height: 40px; }
.mark-text { display: flex; flex-direction: column; color: #4a86c8; }
.mark-text strong { font-size: 21px; line-height: 24px; }
.mark-text span { font: 700 15px/18px "Liberation Sans", sans-serif; color: #58bb74; }
.ime { position: absolute; right: 3px; bottom: 4px; width: 60px; height: 25px; border-radius: 5px; background: #fff; box-shadow: 0 0 4px #333; text-align: center; line-height: 25px; font-size: 13px; white-space: nowrap; }
```
